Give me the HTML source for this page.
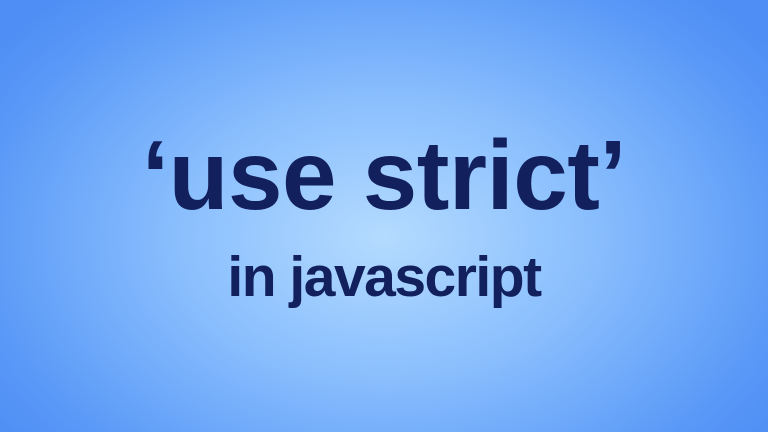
<!DOCTYPE html>
<html><head><style>
html,body{margin:0;padding:0}
body{width:768px;height:432px;overflow:hidden;position:relative;
background:radial-gradient(ellipse 62% 75% at 50% 55%,#b4dbff 0%,#88bdfd 45%,#5a99f7 85%,#4f8ff5 100%);
font-family:"Liberation Sans",sans-serif;color:#12205e;font-weight:bold}
.t{position:absolute;left:0;width:768px;text-align:center;white-space:nowrap}
.a{top:115px;font-size:98px;line-height:120px;letter-spacing:-0.5px}
.b{top:241px;font-size:57px;line-height:72px;letter-spacing:-1.5px}
</style></head><body>
<div class="t a">‘use strict’</div>
<div class="t b">in javascript</div>
</body></html>
